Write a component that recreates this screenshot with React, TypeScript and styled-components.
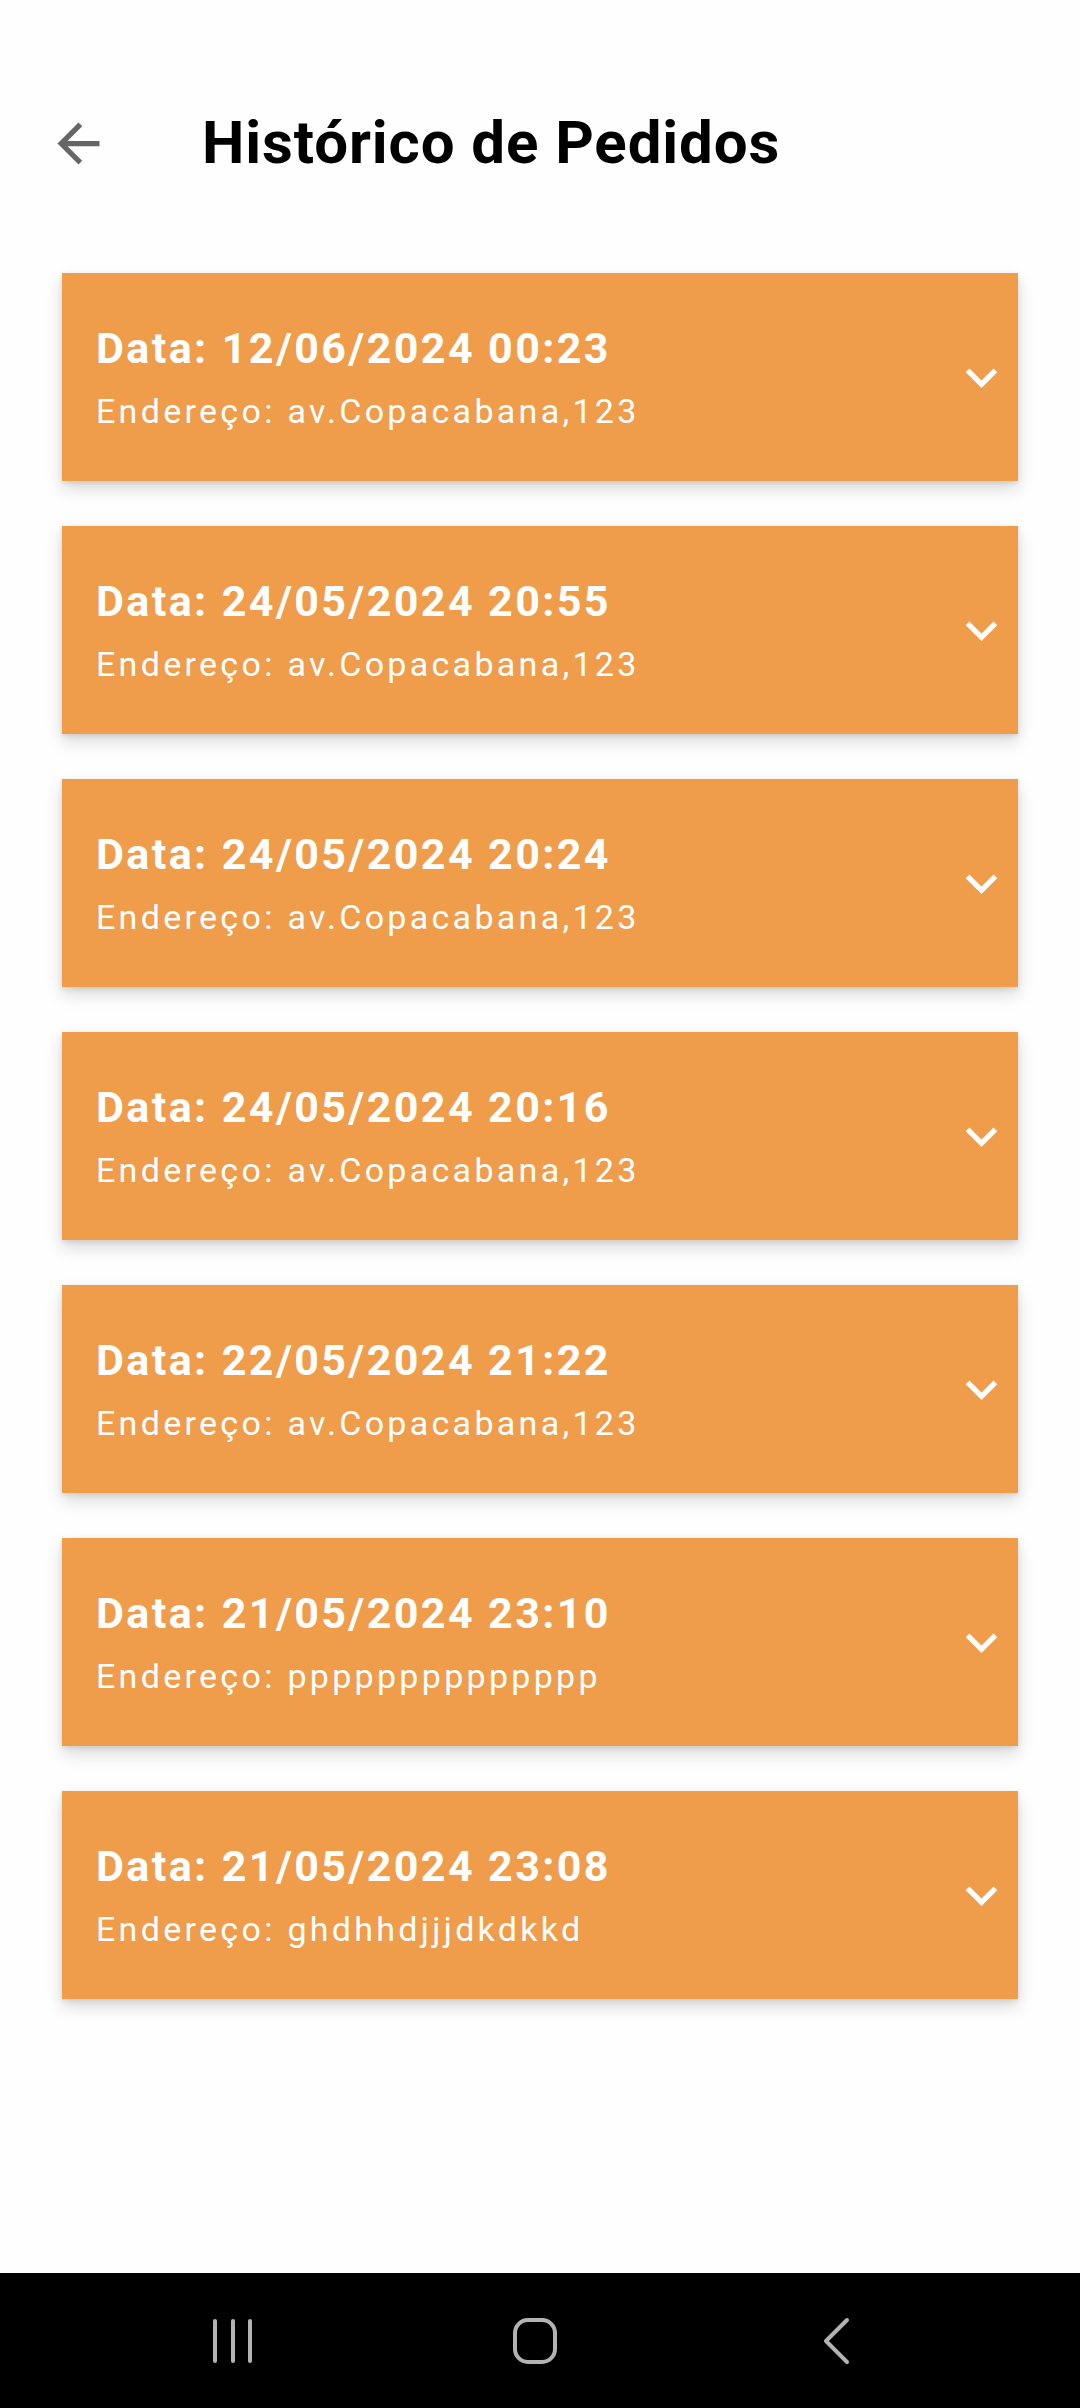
import React from 'react';
import styled, { createGlobalStyle } from 'styled-components';
import { MdArrowBack, MdExpandMore } from 'react-icons/md';

interface Order {
  date: string;
  address: string;
}

const orders: Order[] = [
  { date: '12/06/2024 00:23', address: 'av.Copacabana,123' },
  { date: '24/05/2024 20:55', address: 'av.Copacabana,123' },
  { date: '24/05/2024 20:24', address: 'av.Copacabana,123' },
  { date: '24/05/2024 20:16', address: 'av.Copacabana,123' },
  { date: '22/05/2024 21:22', address: 'av.Copacabana,123' },
  { date: '21/05/2024 23:10', address: 'pppppppppppppp' },
  { date: '21/05/2024 23:08', address: 'ghdhhdjjjdkdkkd' },
];

const GlobalStyle = createGlobalStyle`
  html, body {
    margin: 0;
    padding: 0;
    background: #fefefe;
    font-family: Roboto, "Noto Sans", Arial, sans-serif;
  }
`;

const App: React.FC = () => {
  return (
    <Page>
      <GlobalStyle />
      <Main>
        <Header>
          <BackButton aria-label="Voltar">
            <MdArrowBack size={63} />
          </BackButton>
          <Title>Histórico de Pedidos</Title>
        </Header>

        <OrderList>
          {orders.map(order => (
            <OrderCard key={order.date}>
              <OrderInfo>
                <OrderDate>Data: {order.date}</OrderDate>
                <OrderAddress>Endereço: {order.address}</OrderAddress>
              </OrderInfo>
              <ExpandIcon>
                <MdExpandMore size={63} />
              </ExpandIcon>
            </OrderCard>
          ))}
        </OrderList>
      </Main>

      <NavBar>
        <NavSlot>
          <svg width="44" height="46" viewBox="0 0 44 46" fill="none" stroke="#b3b3b3" strokeWidth="4" strokeLinecap="round">
            <line x1="4" y1="3" x2="4" y2="43" />
            <line x1="22" y1="3" x2="22" y2="43" />
            <line x1="39" y1="3" x2="39" y2="43" />
          </svg>
        </NavSlot>
        <NavSlot>
          <svg width="46" height="46" viewBox="0 0 46 46" fill="none" stroke="#b3b3b3" strokeWidth="4">
            <rect x="3" y="2" width="40" height="42" rx="13" />
          </svg>
        </NavSlot>
        <NavSlot>
          <svg width="30" height="48" viewBox="0 0 30 48" fill="none" stroke="#b3b3b3" strokeWidth="4" strokeLinecap="round" strokeLinejoin="round">
            <polyline points="25,3 4,24 25,45" />
          </svg>
        </NavSlot>
      </NavBar>
    </Page>
  );
};

const Page = styled.div`
  min-height: 2408px;
  display: flex;
  flex-direction: column;
  background: #fefefe;
`;

const Main = styled.div`
  flex: 1;
  display: flex;
  flex-direction: column;
`;

const Header = styled.header`
  display: flex;
  align-items: center;
  height: 70px;
  margin-top: 108px;
  padding-left: 47px;
  gap: 92px;
`;

const BackButton = styled.div`
  width: 63px;
  height: 63px;
  display: flex;
  align-items: center;
  justify-content: center;
  color: #666666;
`;

const Title = styled.h1`
  margin: 0;
  font-size: 60px;
  line-height: 70px;
  font-weight: 700;
  letter-spacing: 0.9px;
  color: #000000;
`;

const OrderList = styled.div`
  display: flex;
  flex-direction: column;
  gap: 45px;
  margin: 95px 62px 0;
`;

const OrderCard = styled.div`
  display: flex;
  align-items: center;
  background: #ef9c4b;
  padding: 50px 5px 50px 34px;
  box-shadow: 0 8px 16px rgba(0, 0, 0, 0.14), 0 2px 5px rgba(0, 0, 0, 0.1);
`;

const OrderInfo = styled.div`
  flex: 1;
  display: flex;
  flex-direction: column;
  gap: 18px;
  color: #ffffff;
`;

const OrderDate = styled.div`
  font-size: 43px;
  line-height: 50px;
  font-weight: 700;
  letter-spacing: 2.4px;
`;

const OrderAddress = styled.div`
  font-size: 34px;
  line-height: 40px;
  font-weight: 400;
  letter-spacing: 3.3px;
`;

const ExpandIcon = styled.div`
  width: 63px;
  height: 63px;
  display: flex;
  align-items: center;
  justify-content: center;
  color: #ffffff;
`;

const NavBar = styled.nav`
  height: 135px;
  background: #000000;
  display: flex;
  align-items: center;
  justify-content: center;
  gap: 182px;
  padding-right: 10px;
`;

const NavSlot = styled.div`
  width: 120px;
  display: flex;
  align-items: center;
  justify-content: center;
`;

export default App;
